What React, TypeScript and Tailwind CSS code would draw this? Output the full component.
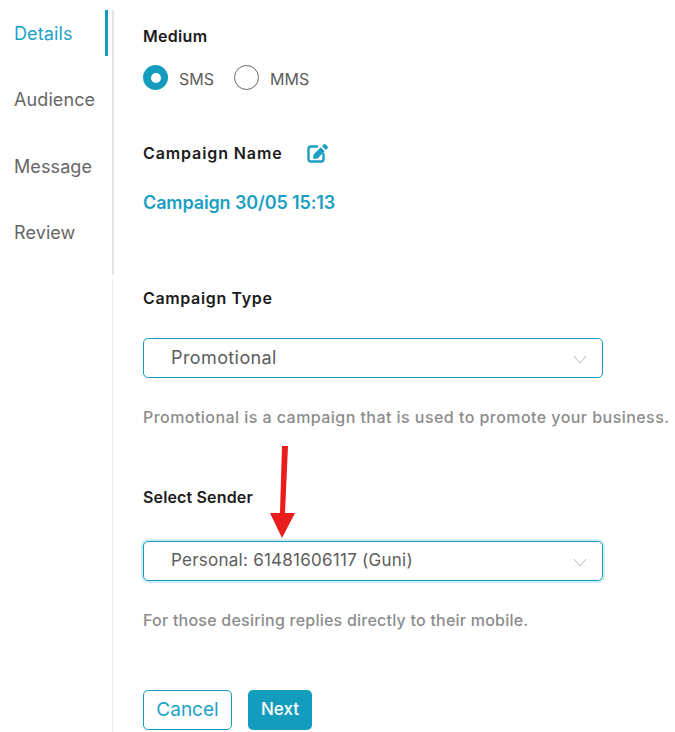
const navItems = ["Details", "Audience", "Message", "Review"];

const Chevron = () => (
  <svg width="14" height="9" viewBox="0 0 14 9" fill="none" className="mt-[3px]">
    <path d="M1 1l6 7 6-7" stroke="#b9b9b9" strokeWidth="1" />
  </svg>
);

const EditIcon = () => (
  <svg width="22" height="20" viewBox="0 0 22 20" fill="none" className="ml-[24px]">
    <path
      d="M10 3.5H4a2.5 2.5 0 0 0-2.5 2.5v10A2.5 2.5 0 0 0 4 18.5h10a2.5 2.5 0 0 0 2.5-2.5v-5"
      stroke="#1a9fc2"
      strokeWidth="2.4"
      strokeLinecap="round"
    />
    <path
      d="M16.6 1.5a1.4 1.4 0 0 1 2 0l1.9 1.9a1.4 1.4 0 0 1 0 2L18.9 7 15 3.1zM13.8 4.3l3.9 3.9-7.2 7.2-4.4.6.5-4.5z"
      fill="#1a9fc2"
    />
  </svg>
);

const SelectBox = ({ value, glow, textClass }: { value: string; glow?: boolean; textClass: string }) => (
  <div
    className={`flex h-10 w-[460px] items-center justify-between rounded-[5px] border border-[#139cbd] pl-[27px] pr-[15px] text-[#5d5d5d] ${
      glow ? "shadow-[0_0_0_2px_#d3edf6]" : ""
    }`}
  >
    <span className={`-mt-[1px] ${textClass}`}>{value}</span>
    <Chevron />
  </div>
);

const Radio = ({ label, checked }: { label: string; checked?: boolean }) => (
  <div className="flex h-[25px] items-center">
    {checked ? (
      <span className="flex h-[25px] w-[25px] items-center justify-center rounded-full bg-[#139cbd]">
        <span className="h-[10px] w-[10px] rounded-full bg-white" />
      </span>
    ) : (
      <span className="h-[25px] w-[25px] rounded-full border border-[#6b6b6b]" />
    )}
    <span className="mt-[3px] ml-[11px] text-[16px] text-[#5d5d5d]">{label}</span>
  </div>
);

export default function App() {
  return (
    <div className="relative flex h-[732px] w-[675px] overflow-hidden bg-white font-['Inter',sans-serif]">
      <div className="flex w-[114px] shrink-0 flex-col">
        <nav className="mt-[10px] h-[265px] border-r-2 border-[#e4e4e4]">
          {navItems.map((item, i) => (
            <div
              key={item}
              className={`mb-[20.5px] flex h-[46px] w-[108px] items-center pl-[14px] text-[18px] tracking-[0.1px] ${
                i === 0 ? "border-r-[3px] border-[#139cbd] text-[#1ba3c6]" : "text-[#666666]"
              }`}
            >
              {item}
            </div>
          ))}
        </nav>
        <div className="mt-[3px] w-[113px] flex-1 border-r border-[#ececec]" />
      </div>

      <main className="flex-1 pl-[29px]">
        <h2 className="mt-[26px] text-[16px] leading-5 font-semibold tracking-[0.3px] text-[#1b1b1b]">Medium</h2>
        <div className="mt-[19px] flex gap-[20px]">
          <Radio label="SMS" checked />
          <Radio label="MMS" />
        </div>

        <div className="mt-[51px] flex h-6 items-center">
          <h2 className="text-[16px] font-semibold tracking-[0.9px] text-[#1b1b1b]">Campaign Name</h2>
          <EditIcon />
        </div>
        <p className="mt-[26px] text-[18px] leading-6 font-semibold tracking-[-0.13px] text-[#1a9fc2]">Campaign 30/05 15:13</p>

        <h2 className="mt-[73px] text-[16px] leading-5 font-semibold tracking-[0.65px] text-[#1b1b1b]">Campaign Type</h2>
        <div className="mt-[30px]">
          <SelectBox value="Promotional" textClass="text-[18px] tracking-[0.4px]" />
        </div>
        <p className="mt-[29px] text-[16px] leading-5 font-medium tracking-[0.45px] whitespace-nowrap text-[#8c8c8c]">
          Promotional is a campaign that is used to promote your business.
        </p>

        <h2 className="mt-[60px] text-[16px] leading-5 font-semibold tracking-[0.15px] text-[#1b1b1b]">Select Sender</h2>
        <div className="mt-[34px]">
          <SelectBox value="Personal: 61481606117 (Guni)" glow textClass="text-[17px] tracking-[0.25px]" />
        </div>
        <p className="mt-[29px] text-[16px] leading-5 font-medium tracking-[0.23px] whitespace-nowrap text-[#8c8c8c]">
          For those desiring replies directly to their mobile.
        </p>

        <div className="mt-[60px] flex gap-4">
          <button className="h-10 w-[89px] rounded-[5px] border border-[#139cbd] text-[19px] text-[#1ba3c6]">Cancel</button>
          <button className="h-10 w-16 rounded-[5px] bg-[#139cbd] text-[17px] font-medium text-white">Next</button>
        </div>
      </main>

      {/* annotation arrow over the form */}
      <svg className="absolute top-[444px] left-[268px]" width="30" height="96" viewBox="0 0 30 96">
        <path d="M14 2h6l-3 67h10L14 94 2 69h10z" fill="#ea1c1c" />
      </svg>
    </div>
  );
}
